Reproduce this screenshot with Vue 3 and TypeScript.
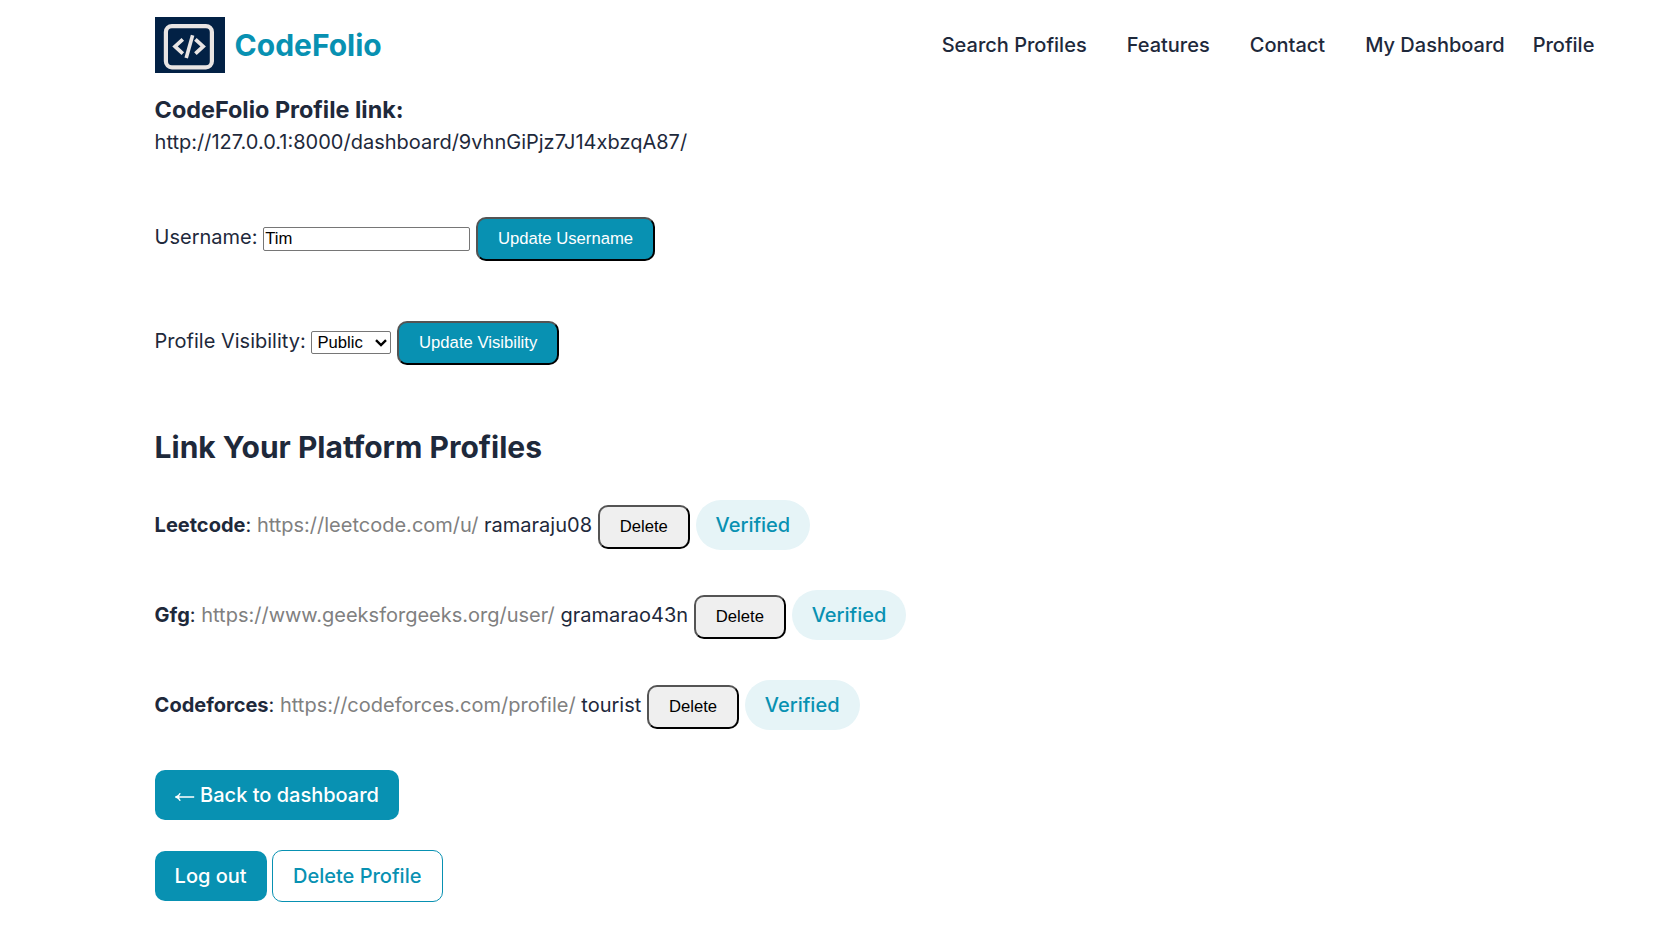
<script setup lang="ts">
import { ref } from 'vue'

interface Platform {
  name: string
  base: string
  user: string
}

const navLinks: string[] = ['Search Profiles', 'Features', 'Contact', 'My Dashboard', 'Profile']
const username = ref('Tim')
const visibility = ref('Public')
const platforms = ref<Platform[]>([
  { name: 'Leetcode', base: 'https://leetcode.com/u/', user: 'ramaraju08' },
  { name: 'Gfg', base: 'https://www.geeksforgeeks.org/user/', user: 'gramarao43n' },
  { name: 'Codeforces', base: 'https://codeforces.com/profile/', user: 'tourist' },
])

function remove(name: string) {
  platforms.value = platforms.value.filter((p) => p.name !== name)
}
</script>

<template>
  <div class="page">
    <header class="header">
      <a class="brand">
        <svg class="logo" viewBox="0 0 70 56" fill="none">
          <rect width="70" height="56" fill="#022145" />
          <rect x="10.9" y="9.1" width="46" height="41.2" rx="6" stroke="#e9e5e4" stroke-width="4.2" />
          <path d="M27.8 22.3 20 29.4l7.8 7.3M40.4 22.3l7.8 7.1-7.8 7.3" stroke="#e9e5e4" stroke-width="3.7" />
          <path d="M37.6 18.3 31.2 41" stroke="#e9e5e4" stroke-width="3.6" />
        </svg>
        <span class="brand-name">CodeFolio</span>
      </a>
      <nav class="nav">
        <a v-for="link in navLinks" :key="link" class="nav-link">{{ link }}</a>
      </nav>
    </header>

    <main class="content">
      <h3 class="link-title">CodeFolio Profile link:</h3>
      <p class="link">http://127.0.0.1:8000/dashboard/9vhnGiPjz7J14xbzqA87/</p>

      <form class="row form-row" @submit.prevent>
        <label for="username">Username:</label>
        <input id="username" v-model="username" class="input" type="text" />
        <button class="btn btn-fill">Update Username</button>
      </form>

      <form class="row form-row" @submit.prevent>
        <label for="visibility">Profile Visibility:</label>
        <span class="select-wrap">
          <select id="visibility" v-model="visibility" class="select">
            <option>Public</option>
            <option>Private</option>
          </select>
          <svg class="chevron" viewBox="0 0 12 8" fill="none" stroke="#000" stroke-width="2.4">
            <path d="M1 1.2 6 6l5-4.8" />
          </svg>
        </span>
        <button class="btn btn-fill">Update Visibility</button>
      </form>

      <h2 class="section-title">Link Your Platform Profiles</h2>

      <div v-for="p in platforms" :key="p.name" class="row platform">
        <span><strong>{{ p.name }}</strong>:</span>
        <span class="base">{{ p.base }}</span>
        <span>{{ p.user }}</span>
        <button class="btn" @click="remove(p.name)">Delete</button>
        <span class="badge">Verified</span>
      </div>

      <div class="row">
        <a class="action back">
          <svg class="arrow" viewBox="0 0 20 12" fill="none" stroke="#fff" stroke-width="1.4">
            <path d="M19.2 6H1.2M5.2 2.2C4.4 4 3 5.3 1 6c2 .7 3.4 2 4.2 3.8" />
          </svg>
          <span>Back to dashboard</span>
        </a>
      </div>
      <div class="row account">
        <a class="action">Log out</a>
        <a class="action outline">Delete Profile</a>
      </div>
    </main>
  </div>
</template>

<style>
body {
  margin: 0;
  background: #fff;
}
</style>

<style scoped>
.page {
  box-sizing: border-box;
  height: 930px;
  padding: 17px 0 0 154.6px;
  overflow: hidden;
  font: 20px/30px Inter, "Liberation Sans", sans-serif;
  color: #1e293b;
}
.header {
  display: flex;
  align-items: center;
  justify-content: space-between;
  height: 56px;
  padding-right: 61.6px;
}
.brand {
  display: flex;
  align-items: center;
  gap: 10px;
}
.logo {
  width: 70px;
  height: 56px;
}
.brand-name {
  font-size: 30px;
  font-weight: 700;
  color: #0891b2;
}
.nav {
  display: flex;
  gap: 40px;
  font-weight: 500;
}
.nav-link:last-child {
  margin-left: -12px;
}
.link-title {
  margin: 19px 0 0;
  font-size: 23.4px;
  line-height: 35px;
  font-weight: 700;
}
.link {
  margin: 0 0 60px;
}
.row {
  display: flex;
  align-items: baseline;
  gap: 5.7px;
  white-space: nowrap;
}
.form-row {
  height: 44px;
  margin-bottom: 60px;
}
.input,
.select,
.btn {
  box-sizing: border-box;
  margin: 0;
  font: 16.667px "Liberation Sans", Arial, sans-serif;
}
.input {
  width: 207px;
  height: 24px;
  padding: 1px;
  border: 1px solid #767676;
  border-radius: 2px;
  color: #000;
  background: #fff;
}
.select-wrap {
  position: relative;
  display: inline-flex;
  align-items: baseline;
}
.select {
  appearance: none;
  width: 80px;
  height: 23px;
  padding: 0 0 0 5px;
  border: 1px solid #767676;
  border-radius: 2px;
  color: #000;
  background: #fff;
}
.chevron {
  position: absolute;
  right: 4px;
  top: 8px;
  width: 12px;
  height: 8px;
  pointer-events: none;
}
.btn {
  height: 44px;
  padding: 10px 20px;
  border: 2px outset #000;
  border-radius: 10px;
  color: #000;
  background: #efefef;
}
.btn-fill {
  color: #fff;
  background: #0891b2;
}
.section-title {
  margin: 0 0 30px;
  font-size: 30px;
  line-height: 45px;
  font-weight: 700;
}
.platform {
  height: 50px;
  margin-bottom: 40px;
}
.base {
  color: #808080;
}
.badge {
  padding: 10px 20px;
  border-radius: 25px;
  font-weight: 500;
  color: #0891b2;
  background: #e6f4f7;
}
.action {
  padding: 10px 20px;
  border-radius: 10px;
  font-weight: 500;
  color: #fff;
  background: #0891b2;
}
.back {
  display: flex;
  align-items: center;
  gap: 5.5px;
  padding-right: 20.5px;
}
.arrow {
  width: 20px;
  height: 12px;
  margin-top: 3px;
}
.account {
  margin-top: 30px;
  gap: 5px;
}
.outline {
  padding: 10px 20.4px;
  border: 1px solid #0891b2;
  color: #0891b2;
  background: #fff;
}
</style>
